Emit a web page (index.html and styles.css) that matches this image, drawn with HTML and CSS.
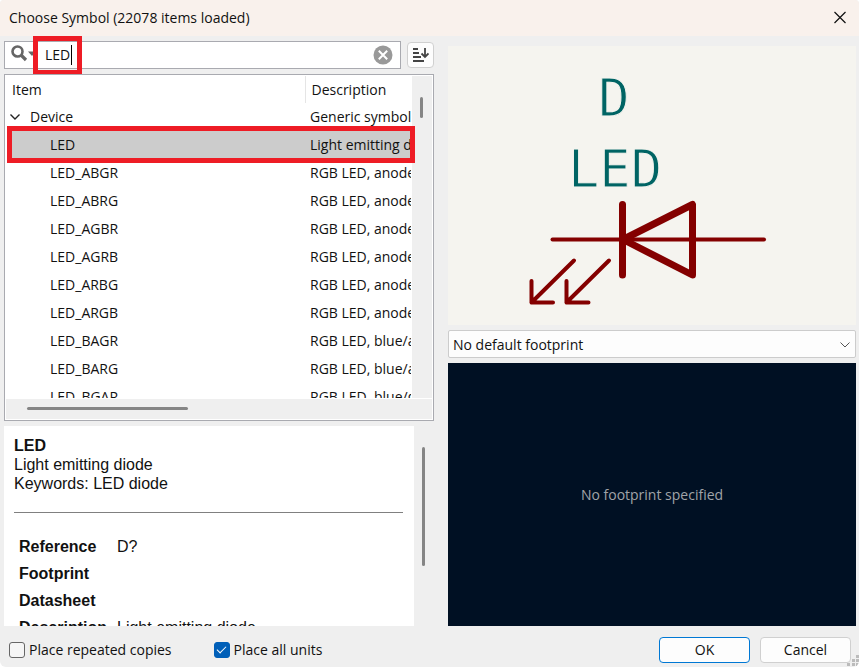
FILE: index.html
```html
<!DOCTYPE html>
<html lang="en">
<head>
<meta charset="utf-8">
<title>Choose Symbol</title>
<link rel="stylesheet" href="styles.css">
</head>
<body>
<main class="dialog">
  <header class="titlebar">
    <h1>Choose Symbol (22078 items loaded)</h1>
    <button class="close" aria-label="Close"><svg width="14" height="14" viewBox="0 0 14 14"><path d="M1.500 1 12.500 12M12.500 1 1.500 12" fill="none" stroke="#111" stroke-width="1.200"/></svg></button>
  </header>
  <div class="content">
    <section class="left">
      <div class="search-row">
        <div class="search">
          <svg class="magnifier" width="26" height="20" viewBox="0 0 26 20"><circle cx="7.500" cy="7.500" r="5" fill="none" stroke="#666" stroke-width="2.600"/><path d="M11 11 16 16" stroke="#666" stroke-width="3.200"/><path d="M18 7.500H26L22 12Z" fill="#666"/></svg>
          <input type="text" value="LED" aria-label="Search symbols">
          <span class="caret"></span>
          <button class="clear" aria-label="Clear search"><svg width="20" height="20" viewBox="0 0 20 20"><circle cx="10" cy="10" r="9.500" fill="#999"/><path d="M5.800 5.800 14.200 14.200M14.200 5.800 5.800 14.200" stroke="#fff" stroke-width="2"/></svg></button>
          <span class="mark mark-search"></span>
        </div>
        <button class="sort" aria-label="Sort"><svg width="16" height="16" viewBox="0 0 16 16"><path d="M0 2H5M0 6H6M0 10H8M0 14H11" stroke="#444" stroke-width="2"/><path d="M12 1V10M8.500 6.500 12 10 15.500 6.500" fill="none" stroke="#444" stroke-width="1.800"/></svg></button>
      </div>
      <div class="tree">
        <div class="tree-view">
          <table>
            <colgroup><col class="col-item"><col></colgroup>
            <thead><tr><th>Item</th><th>Description</th></tr></thead>
            <tbody>
              <tr class="group"><td><button class="expander" aria-label="Collapse Device"><svg width="10" height="8" viewBox="0 0 10 8"><path d="M.5 .5 5 5 9.500 .5" fill="none" stroke="#222" stroke-width="1.400"/></svg></button>Device</td><td>Generic symbols</td></tr>
              <tr class="selected"><td>LED</td><td>Light emitting diode</td></tr>
              <tr><td>LED_ABGR</td><td>RGB LED, anode/blue</td></tr>
              <tr><td>LED_ABRG</td><td>RGB LED, anode/blue</td></tr>
              <tr><td>LED_AGBR</td><td>RGB LED, anode/green</td></tr>
              <tr><td>LED_AGRB</td><td>RGB LED, anode/green</td></tr>
              <tr><td>LED_ARBG</td><td>RGB LED, anode/red</td></tr>
              <tr><td>LED_ARGB</td><td>RGB LED, anode/red</td></tr>
              <tr><td>LED_BAGR</td><td>RGB LED, blue/anode</td></tr>
              <tr><td>LED_BARG</td><td>RGB LED, blue/anode</td></tr>
              <tr><td>LED_BGAR</td><td>RGB LED, blue/green</td></tr>
            </tbody>
          </table>
        </div>
        <div class="vbar"><span></span></div>
        <div class="hbar"><span></span></div>
        <span class="mark mark-row"></span>
      </div>
      <div class="details">
        <div class="details-view">
          <h2>LED</h2>
          <p>Light emitting diode</p>
          <p>Keywords: LED diode</p>
          <hr>
          <table>
            <tr><th>Reference</th><td>D?</td></tr>
            <tr><th>Footprint</th><td></td></tr>
            <tr><th>Datasheet</th><td></td></tr>
            <tr><th>Description</th><td>Light emitting diode</td></tr>
          </table>
        </div>
        <div class="details-bar"><span></span></div>
      </div>
    </section>
    <section class="right">
      <div class="symbol">
        <svg viewBox="0 0 408 279" role="img" aria-label="LED symbol">
          <g class="symbol-text"><text x="166" y="70" text-anchor="middle">D</text><text x="167" y="141" text-anchor="middle">LED</text></g>
          <g fill="none" stroke="#840000" stroke-linecap="round" stroke-linejoin="round">
            <path d="M104.500 193.500H316" stroke-width="4"/>
            <path d="M174.500 158.500V229M244.500 158.500V229L175 193.500Z" stroke-width="7"/>
            <path d="M126 214.500 83.500 256.500M83.500 235V256.500H105M161 214.500 118.500 256.500M118.500 235V256.500H140.500" stroke-width="4"/>
          </g>
        </svg>
      </div>
      <div class="select-wrap">
        <select aria-label="Footprint"><option>No default footprint</option></select>
        <svg width="10" height="6" viewBox="0 0 10 6"><path d="M.5 .5 5 5 9.500 .5" fill="none" stroke="#555" stroke-width="1"/></svg>
      </div>
      <div class="footprint">No footprint specified</div>
    </section>
  </div>
  <footer>
    <label><input type="checkbox">Place repeated copies</label>
    <label><input type="checkbox" checked>Place all units</label>
    <div class="actions"><button class="primary">OK</button><button>Cancel</button></div>
    <svg class="grip" width="12" height="12" viewBox="0 0 12 12"><path d="M9 0h3v3H9zM5 4h3v3H5zM9 4h3v3H9zM0 8h3v3H0zM5 8h3v3H5zM9 8h3v3H9z" fill="#bbb"/></svg>
  </footer>
</main>
</body>
</html>
```
FILE: styles.css
```css
* { box-sizing: border-box; }

body {
  margin: 0;
  height: 100vh;
  padding-bottom: 5px;
  background: #fff;
  color: #111;
  font: 14px/20px "Open Sans", "Noto Sans", sans-serif;
}

button, input, select { font: inherit; color: inherit; }

button {
  display: inline-flex;
  align-items: center;
  justify-content: center;
  padding: 0;
  border: 0;
  background: none;
}

h1, h2, p { margin: 0; font-weight: 400; }
h1 { font-size: 14px; }

.dialog {
  display: flex;
  flex-direction: column;
  height: 100%;
  background: #efefef;
  border-radius: 4px 4px 6px 6px;
  overflow: hidden;
}

.titlebar {
  display: flex;
  align-items: center;
  justify-content: space-between;
  flex: 0 0 36px;
  padding: 0 12px 0 9px;
  background: #f9f1ec;
}

.content {
  flex: 1;
  min-height: 0;
  display: grid;
  grid-template-columns: 430fr 408fr;
  grid-template-rows: minmax(0, 1fr);
  gap: 14px;
  padding: 5px 3px 0 4px;
}

.left, .right {
  display: flex;
  flex-direction: column;
  gap: 5px;
  min-width: 0;
}

.right { padding-top: 5px; }

.search-row {
  display: flex;
  align-items: center;
  gap: 6px;
  flex: 0 0 28px;
}

.search {
  position: relative;
  flex: 1;
  display: flex;
  align-items: center;
  height: 28px;
  padding: 0 7px 0 5px;
  border: 1px solid #a9aab0;
  background: #fff;
}

.magnifier { flex: none; margin-bottom: 2px; }

.search input {
  flex: 1;
  min-width: 0;
  padding: 0 9px;
  border: 0;
  outline: 0;
  background: none;
}

.caret {
  position: absolute;
  left: 66px;
  top: 3px;
  width: 1px;
  height: 20px;
  background: #000;
}

.mark {
  position: absolute;
  border: 5px solid #ee1c25;
  pointer-events: none;
}

.mark-search { left: 28px; top: -6px; width: 49px; height: 39px; }
.mark-row { left: 2px; right: 18px; top: 51px; height: 37px; }

.sort {
  width: 27px;
  height: 26px;
  border: 1px solid #d0d0d0;
  border-radius: 4px;
  background: #fdfdfd;
}

.tree {
  position: relative;
  flex: 346 1 0;
  min-height: 0;
  display: grid;
  grid-template-columns: minmax(0, 1fr) 20px;
  grid-template-rows: minmax(0, 1fr) 20px;
  row-gap: 1px;
  padding: 1px;
  border: 1px solid #a9aab0;
  background: #fff;
}

.tree-view { overflow: hidden; padding: 0 1px; }

.tree table {
  width: 100%;
  table-layout: fixed;
  border-collapse: collapse;
}

.col-item { width: 298px; }

.tree th, .tree td {
  height: 28px;
  padding: 0 0 0 5px;
  overflow: hidden;
  white-space: nowrap;
  text-align: left;
  font-weight: 400;
}

.tree th { height: 27px; }
.tree th + th { padding-left: 6px; border-left: 1px solid #e5e5e5; }
.tree td:first-child { padding-left: 43px; }
.tree .group td:first-child { padding-left: 2px; }
.selected { background: #ccc; }

.expander { width: 12px; height: 12px; margin-right: 9px; }

.vbar, .hbar { background: #efefef; }
.vbar { padding: 21px 8px; }
.vbar span { display: block; width: 3px; height: 21px; border-radius: 2px; background: #858585; }
.hbar { grid-column: 1 / -1; padding: 8px 21px; }
.hbar span { display: block; width: 161px; height: 3px; border-radius: 2px; background: #858585; }

.details {
  flex: 201 1 0;
  min-height: 0;
  display: flex;
  font: 16px/19px "Liberation Sans", Arial, sans-serif;
}

.details-view {
  flex: 1;
  overflow: hidden;
  padding: 10px 11px 0 10px;
  background: #fff;
}

.details h2 { font-size: 16px; font-weight: 700; }

.details hr {
  height: 1px;
  margin: 19px 0 20px;
  border: 0;
  background: #808080;
}

.details table { border-collapse: collapse; white-space: nowrap; }
.details th, .details td { height: 27px; padding: 0 5px; text-align: left; }
.details-bar { flex: 0 0 20px; padding: 21px 8px; }
.details-bar span { display: block; width: 3px; height: 119px; border-radius: 2px; background: #858585; }

.symbol {
  flex: 279 1 0;
  min-height: 0;
  background: #f5f4ef;
}

.symbol svg { display: block; width: 100%; height: 100%; }

.symbol-text {
  font: 52px "DejaVu Sans Mono", monospace;
  fill: #006464;
  stroke: #f5f4ef;
  stroke-width: 1px;
}

.select-wrap { position: relative; flex: 0 0 28px; }

.select-wrap select {
  appearance: none;
  display: block;
  width: 100%;
  height: 28px;
  padding: 2px 24px 0 4px;
  border: 1px solid #ccc;
  border-radius: 2px;
  background: #fdfdfd;
}

.select-wrap svg { position: absolute; right: 6px; top: 12px; pointer-events: none; }

.footprint {
  flex: 263 1 0;
  min-height: 0;
  display: flex;
  align-items: center;
  justify-content: center;
  background: #001023;
  color: #a0a4a8;
}

footer {
  position: relative;
  flex: 0 0 41px;
  display: flex;
  align-items: center;
  gap: 42px;
  padding: 7px 8px 0 9px;
}

label { display: flex; align-items: center; gap: 4px; }

label input {
  appearance: none;
  width: 16px;
  height: 16px;
  margin: 0;
  border: 1px solid #666;
  border-radius: 3px;
  background: #f5f5f5;
}

label input:checked {
  border-color: #005fb8;
  background: #005fb8;
  display: grid;
  place-items: center;
}

label input:checked::before {
  content: "";
  width: 8px;
  height: 4px;
  margin-bottom: 3px;
  border: solid #fff;
  border-width: 0 0 1px 1px;
  transform: rotate(-45deg);
}

.actions { display: flex; gap: 10px; margin-left: auto; }

.actions button {
  width: 91px;
  height: 26px;
  border: 1px solid #d0d0d0;
  border-radius: 4px;
  background: #fdfdfd;
}

.actions .primary { border-color: #0078d4; }
.grip { position: absolute; right: 0; bottom: 0; }
```
